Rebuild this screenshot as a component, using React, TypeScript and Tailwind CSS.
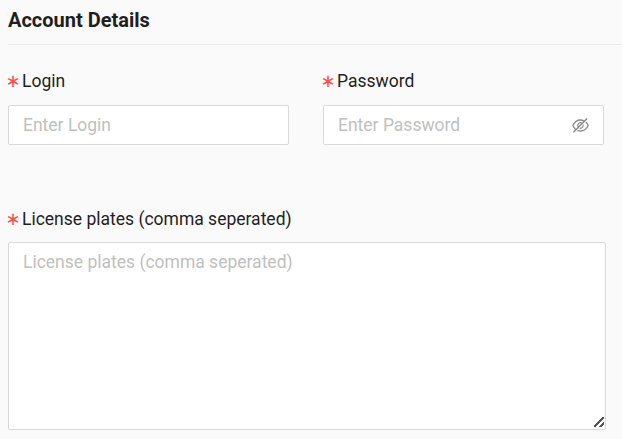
const EyeInvisible = () => (
  <svg viewBox="64 64 896 896" className="w-[17px] h-[17px] shrink-0 -ml-[1px]" fill="#8c8c8c">
    <path d="M942.2 486.2Q889.47 375.11 816.7 305l-50.88 50.88C807.31 395.53 843.45 447.4 874.7 512 791.5 684.2 673.4 766 512 766q-72.67 0-133.87-22.38L323 798.75Q408 838 512 838q288.3 0 430.2-300.3a60.29 60.29 0 000-51.5zm-63.57-320.64L836 122.88a8 8 0 00-11.32 0L715.31 232.2Q624.86 186 512 186q-288.3 0-430.2 300.3a60.3 60.3 0 000 51.5q56.69 119.4 136.5 191.41L112.48 835a8 8 0 000 11.31L155.17 889a8 8 0 0011.31 0l712.15-712.12a8 8 0 000-11.32zM149.3 512C232.6 339.8 350.7 258 512 258c54.54 0 104.13 9.36 149.12 28.39l-70.3 70.3a176 176 0 00-238.13 238.13l-83.42 83.42C223.1 637.49 183.3 582.28 149.3 512zm246.7 0a112.11 112.11 0 01146.2-106.69L401.31 546.2A112 112 0 01396 512z" />
    <path d="M508 624c-3.46 0-6.87-.16-10.25-.47l-52.82 52.82a176.09 176.09 0 00227.42-227.42l-52.82 52.82c.31 3.38.47 6.79.47 10.25a111.94 111.94 0 01-112 112z" />
  </svg>
);

const Label = ({ text }: { text: string }) => (
  <label className="flex items-center h-6 mb-3 text-[17.5px] leading-6 text-[#1f1f1f]">
    <span className="flex justify-center mr-1 w-[10px] text-[#ff4d4f] font-['DejaVu_Sans',sans-serif] text-[18px] leading-6">∗</span>
    <span>{text}</span>
  </label>
);

export default function App() {
  return (
    <div className="w-[622px] h-[439px] overflow-hidden bg-[#fafafa] pl-2 font-['Roboto',sans-serif]">
      <div className="h-[45px] border-b border-[#ebebeb] flex items-start pt-[8px]">
        <h2 className="text-xl leading-6 font-bold text-[#1f1f1f]">Account Details</h2>
      </div>

      <div className="grid grid-cols-[281px_281px] gap-x-[34px] mt-6">
        <div>
          <Label text="Login" />
          <input
            placeholder="Enter Login"
            className="w-full h-10 px-[14px] text-[17.5px] bg-white border border-[#d9d9d9] rounded-[2px] outline-none placeholder:text-[#bfbfbf]"
          />
        </div>
        <div>
          <Label text="Password" />
          <div className="flex items-center w-full h-10 px-[14px] bg-white border border-[#d9d9d9] rounded-[2px]">
            <input
              placeholder="Enter Password"
              className="flex-1 min-w-0 text-[17.5px] bg-transparent outline-none placeholder:text-[#bfbfbf]"
            />
            <EyeInvisible />
          </div>
        </div>
      </div>

      <div className="mt-[62px] w-[598px]">
        <Label text="License plates (comma seperated)" />
        <textarea
          placeholder="License plates (comma seperated)"
          className="-mt-px block w-full h-[188px] px-[14px] py-[7px] text-[17.5px] leading-6 bg-white border border-[#d9d9d9] rounded-[2px] outline-none resize-y placeholder:text-[#bfbfbf] [&::-webkit-resizer]:bg-no-repeat [&::-webkit-resizer]:bg-[length:10px_10px] [&::-webkit-resizer]:bg-[position:4px_3px] [&::-webkit-resizer]:bg-[linear-gradient(135deg,transparent_42%,#555_42%,#555_58%,transparent_58%,transparent_72%,#555_72%,#555_88%,transparent_88%)]"
        />
      </div>
    </div>
  );
}
